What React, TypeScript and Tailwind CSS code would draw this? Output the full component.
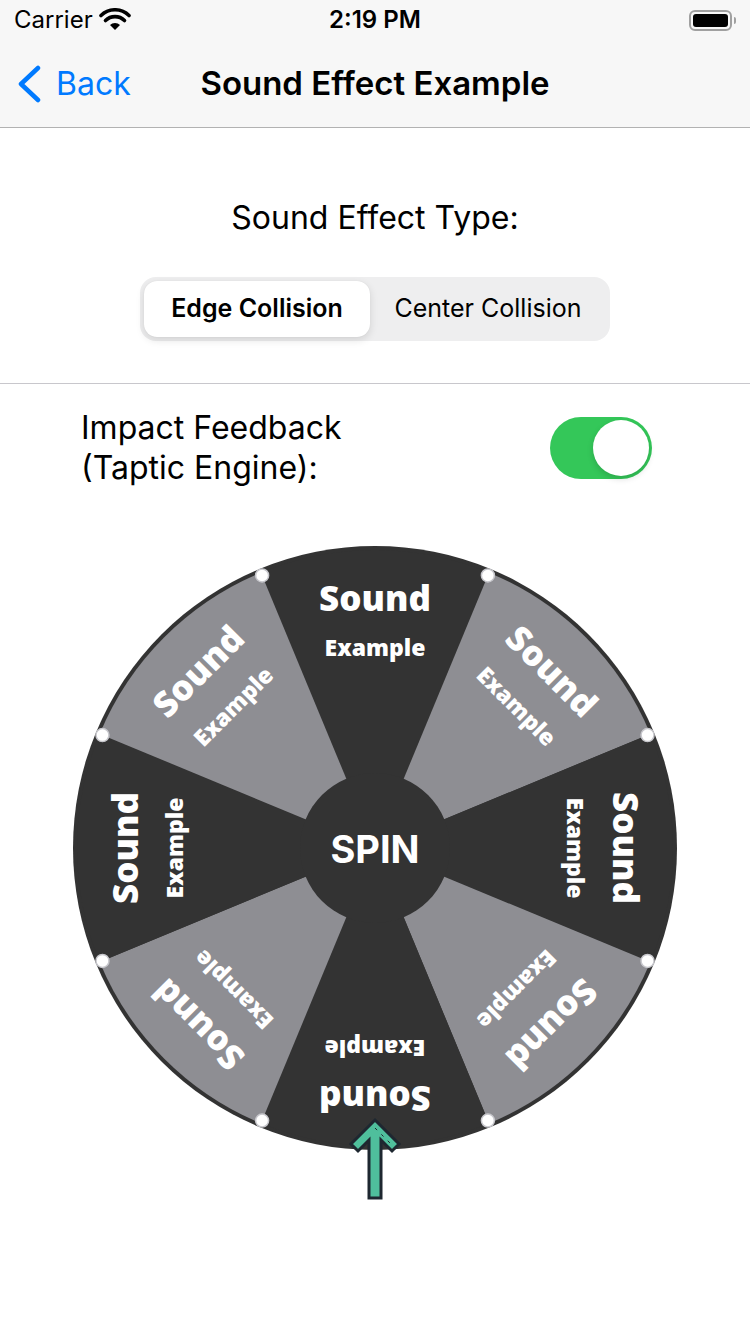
import React from 'react'

const CX = 310
const CY = 310

function pt(r: number, deg: number) {
  const a = (deg * Math.PI) / 180
  return [CX + r * Math.sin(a), CY - r * Math.cos(a)]
}

function slice(r: number, from: number, to: number) {
  const [x1, y1] = pt(r, from)
  const [x2, y2] = pt(r, to)
  return `M${CX},${CY} L${x1},${y1} A${r},${r} 0 0 1 ${x2},${y2} Z`
}

function Wheel() {
  const segs = [0, 1, 2, 3, 4, 5, 6, 7]
  return (
    <svg width="620" height="670" viewBox="0 0 620 670" className="block">
      <circle cx={CX} cy={CY} r={302} fill="#333333" />
      {segs.map((k) => (
        <path
          key={k}
          d={slice(298, k * 45 - 22.5, k * 45 + 22.5)}
          fill={k % 2 === 0 ? '#333333' : '#8e8e93'}
        />
      ))}
      {segs.map((k) => {
        const [x, y] = pt(295, k * 45 + 22.5)
        return <circle key={k} cx={x} cy={y} r={6.5} fill="#ffffff" stroke="#c7c7cc" strokeWidth={1.5} />
      })}
      <circle cx={CX} cy={CY} r={75} fill="#333333" />
      {segs.map((k) => (
        <g key={k} transform={`rotate(${k * 45} ${CX} ${CY})`} fill="#ffffff" fontFamily="'Open Sans', sans-serif" fontWeight={800}>
          <text x={CX} y={CY - 251} textAnchor="middle" dominantBaseline="central" fontSize={35}>
            Sound
          </text>
          <text x={CX} y={CY - 201} textAnchor="middle" dominantBaseline="central" fontSize={23}>
            Example
          </text>
        </g>
      ))}
      <text
        x={CX}
        y={CY + 1}
        textAnchor="middle"
        dominantBaseline="central"
        fill="#ffffff"
        fontFamily="Inter, sans-serif"
        fontWeight={700}
        fontSize={38}
      >
        SPIN
      </text>
      <path
        d="M310,582 L334,606 L327,613 L316,602 L316,660 L304,660 L304,602 L293,613 L286,606 Z"
        fill="#4fbf9c"
        stroke="#1e2730"
        strokeWidth={3}
        strokeLinejoin="miter"
      />
      <path d="M310,590 L326,606" stroke="#1e2730" strokeWidth={1} strokeDasharray="3 6" />
    </svg>
  )
}

export default function App() {
  return (
    <div className="w-[750px] h-[1334px] bg-white overflow-hidden font-['Inter',sans-serif] text-black">
      {/* status bar */}
      <div className="h-10 bg-[#f7f7f7] flex items-center px-[14px] relative">
        <div className="flex items-center gap-[6px]">
          <span className="text-[24px] leading-none">Carrier</span>
          <svg width="32" height="24" viewBox="0 0 32 24">
            <path d="M16 22 L11 17 A7 7 0 0 1 21 17 Z" fill="#000" />
            <path d="M6.5 12.5 A13.5 13.5 0 0 1 25.5 12.5" stroke="#000" strokeWidth="3.6" fill="none" strokeLinecap="round" />
            <path d="M2 7.5 A20 20 0 0 1 30 7.5" stroke="#000" strokeWidth="3.6" fill="none" strokeLinecap="round" />
          </svg>
        </div>
        <span className="absolute left-1/2 -translate-x-1/2 text-[24px] font-semibold leading-none">2:19 PM</span>
        <div className="ml-auto flex items-center gap-[2px]">
          <div className="w-[43px] h-[21px] rounded-[6px] border-2 border-[#a0a0a0] p-[2px]">
            <div className="w-full h-full rounded-[3px] bg-black" />
          </div>
          <div className="w-[2px] h-[7px] rounded-r bg-[#a0a0a0]" />
        </div>
      </div>
      {/* nav bar */}
      <div className="h-[88px] bg-[#f7f7f7] border-b border-[#b2b2b2] flex items-center relative">
        <div className="flex items-center pl-[16px] gap-[14px] text-[#007aff]">
          <svg width="26" height="38" viewBox="0 0 26 38">
            <path d="M22 3 L5 19 L22 35" stroke="#007aff" strokeWidth="4.5" fill="none" strokeLinecap="round" strokeLinejoin="round" />
          </svg>
          <span className="text-[32px] leading-none">Back</span>
        </div>
        <span className="absolute left-1/2 -translate-x-1/2 text-[33px] font-semibold leading-none">
          Sound Effect Example
        </span>
      </div>
      {/* content */}
      <div className="flex flex-col items-center">
        <div className="mt-[74px] text-[32px] leading-none">Sound Effect Type:</div>
        <div className="mt-[43px] w-[470px] h-[64px] rounded-[16px] bg-[#eeeeef] p-[4px] flex">
          <div className="w-[226px] rounded-[13px] bg-white shadow-[0_3px_8px_rgba(0,0,0,0.12),0_0_1px_rgba(0,0,0,0.1)] flex items-center justify-center text-[25px] font-semibold">
            Edge Collision
          </div>
          <div className="flex-1 flex items-center justify-center text-[25px]">Center Collision</div>
        </div>
      </div>
      <div className="mt-[42px] h-px bg-[#c8c7cc]" />
      <div className="flex items-start justify-between pl-[81px] pr-[98px] pt-[16px]">
        <div className="text-[32px] leading-[40px] pt-[8px]">
          Impact Feedback
          <br />
          (Taptic Engine):
        </div>
        <div className="mt-[17px] w-[102px] h-[62px] rounded-full bg-[#34c759] p-[3px] flex justify-end">
          <div className="w-[56px] h-[56px] rounded-full bg-white shadow-[0_3px_6px_rgba(0,0,0,0.15)]" />
        </div>
      </div>
      <div className="flex justify-center mt-[50px]">
        <Wheel />
      </div>
    </div>
  )
}
